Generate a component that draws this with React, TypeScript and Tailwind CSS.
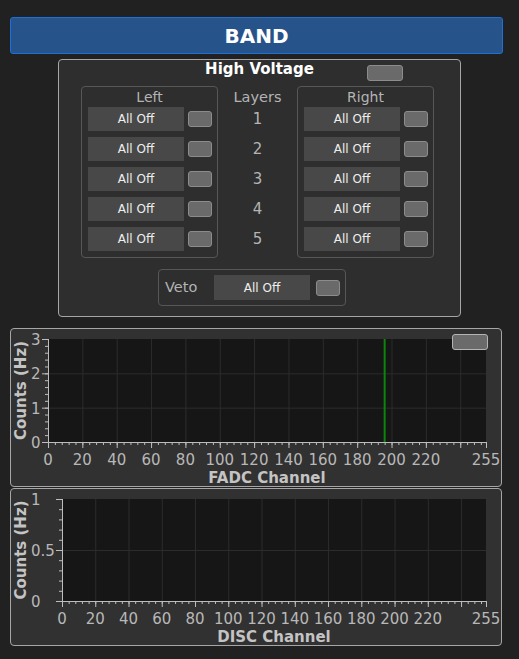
import React from 'react';

const FONT = "font-['DejaVu_Sans','Liberation_Sans',sans-serif]";

function Toggle() {
  return <div className="h-[16px] w-[24px] shrink-0 rounded-[3px] border border-[#8c8c8c] bg-[#6a6a6a]" />;
}

function OffButton() {
  return (
    <div className="flex h-[24px] w-[96px] shrink-0 items-center justify-center bg-[#484848] text-[12px] text-[#eeeeee]">
      All Off
    </div>
  );
}

function SideGroup({ title }: { title: string }) {
  return (
    <div className="h-[172px] w-[137px] rounded-[4px] border border-[#575757]">
      <div className="h-[20px] text-center text-[14px] leading-[20px] text-[#b4b4b4]">{title}</div>
      <div className="flex flex-col gap-[6px] pl-[6px]">
        {[1, 2, 3, 4, 5].map((n) => (
          <div key={n} className="flex h-[24px] items-center gap-[4px]">
            <OffButton />
            <Toggle />
          </div>
        ))}
      </div>
    </div>
  );
}

function range(from: number, to: number, step: number) {
  const out: number[] = [];
  for (let v = from; v <= to + 1e-9; v += step) out.push(Math.round(v * 1000) / 1000);
  return out;
}

type ChartProps = {
  ox: number;
  oy: number;
  w: number;
  h: number;
  x0: number;
  x1: number;
  y0: number;
  y1: number;
  ymax: number;
  yLabels: number[];
  yGrid: number[];
  yMinor: number;
  xTitle: string;
  marker?: number;
};

// plot drawn in page coordinates through the viewBox origin
function Chart({ ox, oy, w, h, x0, x1, y0, y1, ymax, yLabels, yGrid, yMinor, xTitle, marker }: ChartProps) {
  const sx = (v: number) => x0 + (v * (x1 - x0)) / 255;
  const sy = (v: number) => y1 - (v * (y1 - y0)) / ymax;
  const xMajor = [...range(0, 240, 20), 255];
  const xLabels = range(0, 220, 20);
  const xMinor = range(0, 252, 4);
  const yMin = range(0, ymax, yMinor);
  const font = 'DejaVu Sans, Liberation Sans, sans-serif';
  return (
    <svg width={w} height={h} viewBox={`${ox} ${oy} ${w} ${h}`} className="block">
      <rect x={x0} y={y0} width={x1 - x0} height={y1 - y0} fill="#161616" />
      {range(20, 240, 20).map((v) => (
        <line key={v} x1={sx(v) + 0.5} x2={sx(v) + 0.5} y1={y0} y2={y1} stroke="#2c2c2c" strokeWidth={1} />
      ))}
      {yGrid.map((v) => (
        <line key={v} x1={x0} x2={x1} y1={sy(v) + 0.5} y2={sy(v) + 0.5} stroke="#2c2c2c" strokeWidth={1} />
      ))}
      {marker !== undefined && (
        <line x1={sx(marker)} x2={sx(marker)} y1={y0} y2={y1} stroke="#0a870a" strokeWidth={2} />
      )}
      <line x1={x0 + 0.5} x2={x0 + 0.5} y1={y0} y2={y1 + 0.5} stroke="#bdbdbd" strokeWidth={1} />
      <line x1={x0} x2={x1 + 0.5} y1={y1 + 0.5} y2={y1 + 0.5} stroke="#bdbdbd" strokeWidth={1} />
      {xMinor.map((v) => (
        <line key={v} x1={sx(v) + 0.5} x2={sx(v) + 0.5} y1={y1} y2={y1 + 3} stroke="#bdbdbd" strokeWidth={1} />
      ))}
      {xMajor.map((v) => (
        <line key={v} x1={sx(v) + 0.5} x2={sx(v) + 0.5} y1={y1} y2={y1 + 6} stroke="#bdbdbd" strokeWidth={1} />
      ))}
      {yMin.map((v) => (
        <line key={v} x1={x0 - 3} x2={x0} y1={sy(v) + 0.5} y2={sy(v) + 0.5} stroke="#bdbdbd" strokeWidth={1} />
      ))}
      {yLabels.map((v) => (
        <line key={v} x1={x0 - 6} x2={x0} y1={sy(v) + 0.5} y2={sy(v) + 0.5} stroke="#bdbdbd" strokeWidth={1} />
      ))}
      {yLabels.map((v) => (
        <text key={v} x={31} y={sy(v) + 1} fill="#b8b8b8" fontSize={15} fontFamily={font} dominantBaseline="central">
          {v}
        </text>
      ))}
      {[...xLabels, 255].map((v) => (
        <text
          key={v}
          x={sx(v)}
          y={y1 + 18}
          fill="#b8b8b8"
          fontSize={15}
          fontFamily={font}
          textAnchor="middle"
          dominantBaseline="central"
        >
          {v}
        </text>
      ))}
      <text
        x={(x0 + x1) / 2}
        y={y1 + 36}
        fill="#c4c4c4"
        fontSize={15}
        fontWeight="bold"
        fontFamily={font}
        textAnchor="middle"
        dominantBaseline="central"
      >
        {xTitle}
      </text>
      <text
        transform={`translate(21 ${(y0 + y1) / 2}) rotate(-90)`}
        fill="#c4c4c4"
        fontSize={15}
        fontWeight="bold"
        fontFamily={font}
        textAnchor="middle"
        dominantBaseline="central"
      >
        Counts (Hz)
      </text>
    </svg>
  );
}

export default function App() {
  return (
    <div className={`h-[659px] w-[519px] overflow-hidden bg-[#212121] pl-[10px] pt-[17px] ${FONT}`}>
      <div className="flex h-[37px] w-[493px] items-center justify-center rounded-[3px] border border-[#1f70d6] bg-[#27538b] text-[20px] font-bold text-white">
        BAND
      </div>

      {/* High voltage */}
      <div className="ml-[48px] mt-[5px] w-[403px] rounded-[4px] border border-[#a6a6a6] bg-[#2e2e2e] pb-[10px]">
        <div className="grid h-[26px] grid-cols-[1fr_auto_1fr] items-start">
          <div />
          <div className="text-[15px] font-bold leading-[18px] text-white">High Voltage</div>
          <div className="ml-[53px] mt-[5px] h-[16px] w-[36px] rounded-[3px] border border-[#8c8c8c] bg-[#6a6a6a]" />
        </div>
        <div className="flex pl-[22px]">
          <SideGroup title="Left" />
          <div className="w-[79px] pt-[1px] text-center text-[#b4b4b4]">
            <div className="h-[20px] text-[14.5px] leading-[20px]">Layers</div>
            <div className="flex flex-col gap-[6px]">
              {[1, 2, 3, 4, 5].map((n) => (
                <div key={n} className="flex h-[24px] items-center justify-center text-[15px]">
                  {n}
                </div>
              ))}
            </div>
          </div>
          <SideGroup title="Right" />
        </div>
        <div className="ml-[99px] mt-[11px] flex h-[37px] w-[188px] items-center rounded-[4px] border border-[#575757] pl-[6px]">
          <span className="w-[34px] text-[14.5px] text-[#b4b4b4]">Veto</span>
          <div className="ml-[15px] flex h-[25px] w-[96px] items-center justify-center bg-[#484848] text-[12px] text-[#eeeeee]">
            All Off
          </div>
          <div className="ml-[6px]">
            <Toggle />
          </div>
        </div>
      </div>

      {/* FADC */}
      <div className="relative mt-[11px] h-[159px] w-[492px] rounded-[4px] border border-[#a6a6a6] bg-[#313131]">
        <Chart
          ox={11}
          oy={330}
          w={490}
          h={157}
          x0={48}
          x1={486}
          y0={340}
          y1={443}
          ymax={3}
          yLabels={[0, 1, 2, 3]}
          yGrid={[1, 2]}
          yMinor={0.2}
          xTitle="FADC Channel"
          marker={196}
        />
        <div className="absolute left-[441px] top-[5px] h-[16px] w-[36px] rounded-[3px] border border-[#b4b4b4] bg-[#6a6a6a]" />
      </div>

      {/* DISC */}
      <div className="mt-[1px] h-[158px] w-[492px] rounded-[4px] border border-[#a6a6a6] bg-[#313131]">
        <Chart
          ox={11}
          oy={490}
          w={490}
          h={156}
          x0={62}
          x1={486}
          y0={500}
          y1={602}
          ymax={1}
          yLabels={[0, 0.5, 1]}
          yGrid={[0.5]}
          yMinor={0.1}
          xTitle="DISC Channel"
        />
      </div>
    </div>
  );
}
